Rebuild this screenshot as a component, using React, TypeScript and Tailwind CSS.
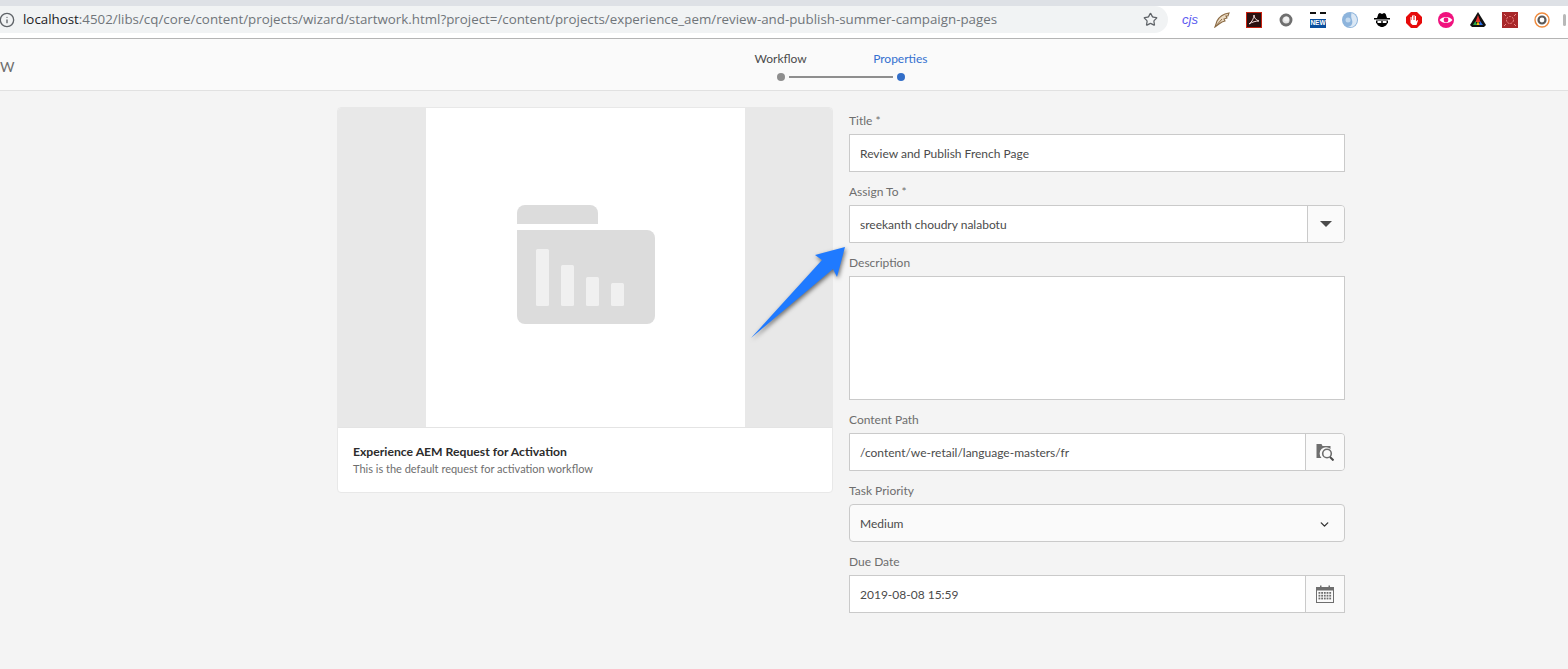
import type { ReactNode } from 'react';
import { ChevronDown, Info, Star } from 'lucide-react';

const font = "font-['Lato','Open_Sans',sans-serif]";

function Label({ text }: { text: string }) {
  return <label className="flex h-[33px] items-center pb-px pt-[8px] text-[12px] leading-none text-[#6e6e6e]">{text}</label>;
}

function FolderSearch() {
  return (
    <svg width="18" height="18" viewBox="0 0 18 18">
      <path d="M0.500 1h5l1 2h8v3a6 6 0 0 0-9 9H0.500z" fill="#6e6e6e" />
      <circle cx="11" cy="10.500" r="4.300" fill="none" stroke="#6e6e6e" strokeWidth="1.600" />
      <path d="M14 14l3.500 3.500" stroke="#4b4b4b" strokeWidth="2" />
    </svg>
  );
}

function CalendarIcon() {
  const cells = [];
  for (let r = 0; r < 3; r++) {
    for (let c = 0; c < 5; c++) {
      cells.push(<rect key={`${r}-${c}`} x={2.500 + c * 2.700} y={7 + r * 2.800} width="1.800" height="1.800" fill="#6e6e6e" />);
    }
  }
  return (
    <svg width="18" height="18" viewBox="0 0 18 18">
      <rect x="0.500" y="2.500" width="17" height="15" fill="none" stroke="#6e6e6e" />
      <rect x="1" y="3" width="16" height="2.500" fill="#6e6e6e" />
      <rect x="4" y="0.500" width="1.500" height="3.500" fill="#6e6e6e" />
      <rect x="12.500" y="0.500" width="1.500" height="3.500" fill="#6e6e6e" />
      {cells}
    </svg>
  );
}

function Extensions() {
  return (
    <div className="ml-[6px] flex items-center">
      <span className="flex w-8 justify-center font-['Liberation_Sans',sans-serif] text-[13px] italic text-[#5a5af0]">cjs</span>
      <span className="flex w-8 justify-center">
        <svg width="16" height="16" viewBox="0 0 16 16">
          <path d="M1 15l2-6c2-4 6-7 12-8l-1 3-2 0 1 2-3 1 1 2-3 1-3 2z" fill="#ecdcc4" stroke="#8b6b45" strokeWidth="1.100" />
          <path d="M1 15l7-8" stroke="#8b6b45" strokeWidth="1" />
        </svg>
      </span>
      <span className="flex w-8 justify-center">
        <svg width="16" height="16" viewBox="0 0 16 16">
          <rect x="0.500" y="0.500" width="15" height="15" fill="#2a0f0f" stroke="#c8200f" />
          <path d="M3 12c3-2 5-6 5-9 0 3 2 5 5 6-3 0-7 1-10 3z" fill="none" stroke="#f2dcdc" strokeWidth="1" />
        </svg>
      </span>
      <span className="flex w-8 justify-center">
        <svg width="16" height="16" viewBox="0 0 16 16">
          <circle cx="8" cy="8" r="6.500" fill="#e2e2e2" />
          <circle cx="8" cy="8" r="5" fill="none" stroke="#6f6f6f" strokeWidth="2.800" />
          <circle cx="8.500" cy="7" r="2.500" fill="#f2f2f2" />
        </svg>
      </span>
      <span className="flex w-8 justify-center">
        <span className="flex h-4 w-4 flex-col border-t-[2px] border-dashed border-[#111] bg-white">
          <span className="mt-[5px] flex h-[9px] items-center justify-center bg-[#0b4f9e] font-['Liberation_Sans',sans-serif] text-[6.500px] font-bold leading-none text-white">NEW</span>
        </span>
      </span>
      <span className="flex w-8 justify-center">
        <svg width="16" height="16" viewBox="0 0 16 16">
          <circle cx="8" cy="8" r="8" fill="#8db4dc" />
          <path d="M6 15c4-1 5-4 4-7S9 4 9.500 1C13 2 15 5 15 8s-2 6-5 7z" fill="#dbe8f5" />
          <circle cx="6" cy="8" r="2.500" fill="#c3d9ee" />
        </svg>
      </span>
      <span className="flex w-8 justify-center">
        <svg width="16" height="14" viewBox="0 0 16 14">
          <path d="M4 2c0-1 1-2 2-2l2 1 2-1c1 0 2 1 2 2l1 3h3v1.500H0V5h3z" fill="#000" />
          <path d="M2 7.500h12v2l-2 3-3 1.500H7L4 12.500l-2-3z" fill="#000" />
          <rect x="3.500" y="8" width="9" height="2" fill="#fff" />
          <rect x="7.300" y="8" width="1.400" height="2" fill="#000" />
        </svg>
      </span>
      <span className="flex w-8 justify-center">
        <svg width="16" height="16" viewBox="0 0 16 16">
          <path d="M5 0h6l5 5v6l-5 5H5l-5-5V5z" fill="#e60a0a" />
          <path d="M4.500 9V5h1v3h.500V3.500h1V8h.500V3h1v5h.500V4h1v5.500l1.200-1.500.8.500L10.500 13h-4L4.500 11z" fill="#fff" />
        </svg>
      </span>
      <span className="flex w-8 justify-center">
        <svg width="16" height="16" viewBox="0 0 16 16">
          <circle cx="8" cy="8" r="8" fill="#f0127e" />
          <path d="M1.500 8c3-4 10-4 13 0-3 4-10 4-13 0z" fill="#fff" />
          <circle cx="8" cy="8" r="2.400" fill="#f0127e" />
        </svg>
      </span>
      <span className="flex w-8 justify-center">
        <svg width="16" height="15" viewBox="0 0 16 15">
          <path d="M8 0l8 13-2 2H2l-2-2z" fill="#111" />
          <path d="M5.500 10l2.500-7 2.500 7z" fill="#e8312a" />
          <path d="M3 13l2.500-4 1.500 4z" fill="#2aa84a" />
          <path d="M9 13l1-4 3 4z" fill="#2a6fe8" />
          <path d="M6.500 13l1.500-4 1.500 4z" fill="#f2c80f" />
        </svg>
      </span>
      <span className="flex w-8 justify-center">
        <svg width="16" height="16" viewBox="0 0 16 16">
          <rect width="16" height="16" fill="#a8282a" />
          <circle cx="8" cy="8" r="3.500" fill="none" stroke="#e88" strokeWidth="1" strokeDasharray="2 1" />
          <path d="M2 2l2 2M14 2l-2 2M2 14l2-2M14 14l-2-2" stroke="#e88" />
        </svg>
      </span>
      <span className="flex w-8 justify-center">
        <svg width="16" height="16" viewBox="0 0 16 16">
          <circle cx="8" cy="8" r="7" fill="#fff" stroke="#ef8a3c" strokeWidth="1.400" />
          <circle cx="8" cy="8" r="3.500" fill="none" stroke="#5a5a5a" strokeWidth="2.200" />
        </svg>
      </span>
      <span className="ml-[5px] h-3 w-[3px] rounded-sm bg-[#b8b8b8]" />
    </div>
  );
}

function Card() {
  return (
    <div className="h-[386px] w-[496px] overflow-hidden rounded border border-[#e8e8e8] bg-white">
      <div className="flex h-[319px] justify-center bg-[#e8e8e8] pl-px">
        <div className="flex w-[319px] items-center justify-center bg-white pb-[6px]">
          <svg width="138" height="119" viewBox="0 0 138 119">
            <path d="M0 19V8a8 8 0 0 1 8-8h65a8 8 0 0 1 8 8v11z" fill="#dcdcdc" />
            <path d="M0 25h130a8 8 0 0 1 8 8v78a8 8 0 0 1-8 8H8a8 8 0 0 1-8-8z" fill="#dcdcdc" />
            <rect x="19" y="44" width="13" height="57" rx="1.500" fill="#f0f0f0" />
            <rect x="44" y="60" width="13" height="41" rx="1.500" fill="#f0f0f0" />
            <rect x="69" y="72" width="13" height="29" rx="1.500" fill="#f0f0f0" />
            <rect x="94" y="78" width="13" height="23" rx="1.500" fill="#f0f0f0" />
          </svg>
        </div>
      </div>
      <div className="border-t border-[#e4e4e4] pl-[15px] pt-[15px]">
        <div className="text-[12.200px] font-bold leading-[17px] text-[#2c2c2c]">Experience AEM Request for Activation</div>
        <div className="text-[11px] leading-[17px] text-[#6e6e6e]">This is the default request for activation workflow</div>
      </div>
    </div>
  );
}

function Input({ value, children, rounded }: { value: string; children?: ReactNode; rounded?: boolean }) {
  return (
    <div className={`flex h-[38px] items-stretch overflow-hidden border border-[#cacaca] ${rounded ? 'rounded-r' : ''}`}>
      <div className="flex flex-1 items-center bg-white pl-[10px] pt-[2px] text-[12px] text-[#4b4b4b]">{value}</div>
      {children}
    </div>
  );
}

function AddOn({ children, width }: { children: ReactNode; width: string }) {
  return <div className={`flex items-center justify-center border-l border-[#cacaca] bg-[#fafafa] ${width}`}>{children}</div>;
}

export default function App() {
  return (
    <div className={`relative h-[669px] w-[1568px] overflow-hidden bg-[#f4f4f4] ${font}`}>
      <div className="h-[6px] bg-[#dee1e6]" />
      <div className="flex h-[33px] items-start border-b border-[#b4b4b4] bg-white">
        <div className="flex h-[27px] w-[1168px] items-center rounded-r-[14px] bg-[#f1f3f4]">
          <Info size={16} className="ml-[-1px] shrink-0 text-[#5f6368]" />
          <span className="ml-2 whitespace-nowrap font-['Open_Sans',sans-serif] text-[13.330px] text-[#70757a]">
            <span className="text-[#202124]">localhost</span>:4502/libs/cq/core/content/projects/wizard/startwork.html?project=/content/projects/experience_aem/review-and-publish-summer-campaign-pages
          </span>
          <Star size={15} className="ml-auto mr-[10px] shrink-0 text-[#5f6368]" />
        </div>
        <div className="flex h-[27px] items-center">
          <Extensions />
        </div>
      </div>

      <div className="relative flex h-[52px] items-center border-b border-[#e1e1e1] bg-[#fafafa]">
        <span className="w-[14px] pt-[4px] text-[14px] text-[#6e6e6e]">W</span>
        <div className="ml-[727px] flex w-[200px] flex-col items-center pt-[4px]">
          <div className="flex w-[173px] justify-between text-[12px] leading-none">
            <span className="text-[#4b4b4b]">Workflow</span>
            <span className="text-[#3470d0]">Properties</span>
          </div>
          <div className="mt-[8px] flex items-center">
            <span className="h-2 w-2 rounded-full bg-[#8e8e8e]" />
            <span className="mx-1 h-[2px] w-[104px] bg-[#8e8e8e]" />
            <span className="h-2 w-2 rounded-full bg-[#326ec8]" />
          </div>
        </div>
      </div>

      <div className="flex gap-4 pl-[337px] pt-[16px]">
        <Card />
        <div className="-mt-[6px] w-[496px]">
          <Label text="Title *" />
          <Input value="Review and Publish French Page" />
          <Label text="Assign To *" />
          <Input value="sreekanth choudry nalabotu" rounded>
            <AddOn width="w-[37px]">
              <span className="h-0 w-0 border-x-[6px] border-t-[6px] border-x-transparent border-t-[#4b4b4b]" />
            </AddOn>
          </Input>
          <Label text="Description" />
          <div className="h-[124px] border border-[#cacaca] bg-white" />
          <Label text="Content Path" />
          <Input value="/content/we-retail/language-masters/fr" rounded>
            <AddOn width="w-[39px]">
              <FolderSearch />
            </AddOn>
          </Input>
          <Label text="Task Priority" />
          <div className="flex h-[38px] items-center justify-between rounded border border-[#cacaca] bg-[#fafafa] pl-[10px] pr-[13px] pt-[2px] text-[12px] text-[#4b4b4b]">
            Medium
            <ChevronDown size={13} strokeWidth={2.500} className="text-[#333]" />
          </div>
          <Label text="Due Date" />
          <Input value="2019-08-08 15:59">
            <AddOn width="w-[39px]">
              <CalendarIcon />
            </AddOn>
          </Input>
        </div>
      </div>

      {/* annotation arrow pasted over the screenshot */}
      <svg className="absolute left-[745px] top-[240px] drop-shadow-[1px_2px_2px_rgba(0,0,0,0.55)]" width="108" height="105" viewBox="0 0 108 105">
        <path d="M6 98L77 20 70 15 100 7 92 37 88 29z" fill="#1f7aff" />
      </svg>
    </div>
  );
}
